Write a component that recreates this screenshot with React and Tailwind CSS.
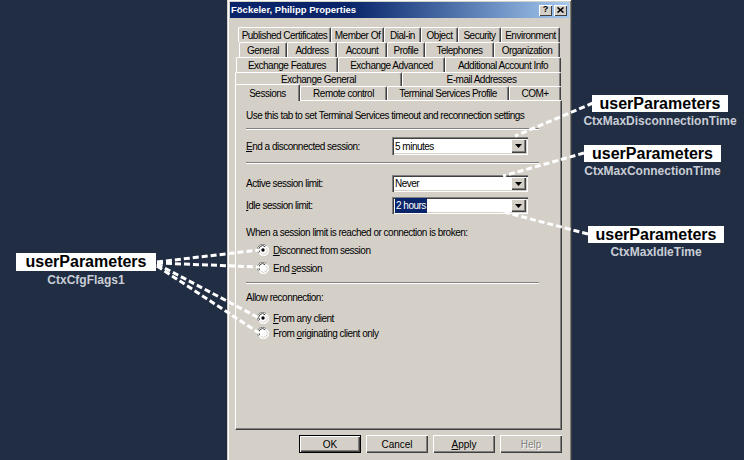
import React from "react";

const tabRows = [
  {
    row: "h-[15px] pl-[3px]",
    tabs: [
      ["Published Certificates", "w-[93px]"],
      ["Member Of", "w-[53px]"],
      ["Dial-in", "w-[37px]"],
      ["Object", "w-[37px]"],
      ["Security", "w-[43px]"],
      ["Environment", "w-[59px]"],
    ],
  },
  {
    row: "h-[15px] pl-[4px]",
    tabs: [
      ["General", "w-[48px]"],
      ["Address", "w-[50px]"],
      ["Account", "w-[50px]"],
      ["Profile", "w-[38px]"],
      ["Telephones", "w-[69px]"],
      ["Organization", "w-[66px]"],
    ],
  },
  {
    row: "h-[15px] pl-[1px]",
    tabs: [
      ["Exchange Features", "w-[102px]"],
      ["Exchange Advanced", "w-[107px]"],
      ["Additional Account Info", "w-[116px]"],
    ],
  },
  {
    row: "h-[14px]",
    tabs: [
      ["Exchange General", "w-[167px]"],
      ["E-mail Addresses", "w-[159px]"],
    ],
  },
];

const Tab = ({ label, w, active }) => (
  <div
    className={`${w} ${
      active ? "h-[17px] -mt-[2px] -mb-px relative z-10 bg-[#d4d0c8]" : "h-full"
    } flex items-center justify-center border-l border-t border-white border-r border-r-[#404040] rounded-t-[2px] shadow-[inset_-1px_0_0_#808080] whitespace-nowrap`}
  >
    {label}
  </div>
);

const Sep = () => (
  <div className="w-[293px] h-[2px] border-t border-[#808080] border-b border-b-white" />
);

const Arrow = () => (
  <svg width="7" height="4" viewBox="0 0 7 4">
    <path d="M0 0h7L3.5 4z" fill="#000" />
  </svg>
);

const Combo = ({ h, children }) => (
  <div className={`w-[136px] ${h} bg-white flex shadow-[inset_1px_1px_0_#808080,inset_2px_2px_0_#404040,inset_-1px_-1px_0_#fff,inset_-2px_-2px_0_#d4d0c8] p-[2px]`}>
    <div className="flex-1 flex items-center pl-px">{children}</div>
    <div className="w-[15px] h-full bg-[#d4d0c8] flex items-center justify-center shadow-[inset_1px_1px_0_#fff,inset_-1px_-1px_0_#404040,inset_-2px_-2px_0_#808080]">
      <Arrow />
    </div>
  </div>
);

const Radio = ({ checked }) => (
  <svg width="12" height="12" viewBox="0 0 12 12">
    <circle cx="6" cy="6" r="5.5" fill="#fff" />
    <path d="M1.8 9.2A5 5 0 0 1 9.2 1.8" stroke="#808080" fill="none" />
    <path d="M2.8 8.2A3.8 3.8 0 0 1 8.2 2.8" stroke="#404040" fill="none" />
    <path d="M10.2 2.8A5 5 0 0 1 2.8 10.2" stroke="#fff" fill="none" />
    <path d="M9.2 3.8A3.8 3.8 0 0 1 3.8 9.2" stroke="#d4d0c8" fill="none" />
    {checked && <circle cx="6" cy="6" r="1.7" fill="#000" />}
  </svg>
);

const RadioRow = ({ checked, className, children }) => (
  <div className={`flex items-center h-[12px] pl-[11px] gap-[4px] ${className}`}>
    <Radio checked={checked} />
    <span>{children}</span>
  </div>
);

const Btn = ({ children, def, disabled }) => (
  <div
    className={`w-[62px] h-[18px] flex items-center justify-center bg-[#d4d0c8] ${
      def
        ? "border border-black shadow-[inset_1px_1px_0_#fff,inset_-1px_-1px_0_#404040,inset_-2px_-2px_0_#808080]"
        : "shadow-[inset_1px_1px_0_#fff,inset_-1px_-1px_0_#404040,inset_-2px_-2px_0_#808080]"
    } ${disabled ? "text-[#808080] [text-shadow:1px_1px_0_#fff]" : ""}`}
  >
    {children}
  </div>
);

const Callout = ({ pos, box, caption }) => (
  <div className={`absolute ${pos} flex flex-col items-center`}>
    <div className={`${box} bg-white flex items-center justify-center text-black font-bold text-[16px] leading-none`}>
      userParameters
    </div>
    <div className="mt-[2px] text-[12px] leading-[14px] font-bold text-[#c9ced6] whitespace-nowrap">
      {caption}
    </div>
  </div>
);

export default function App() {
  return (
    <div className="relative w-[744px] h-[460px] overflow-hidden bg-[#212d43] font-['Liberation_Sans',Arial,sans-serif]">
      {/* dialog */}
      <div className="ml-[227px] -mt-px w-[345px] h-[480px] bg-[#d4d0c8] border border-[#d4d0c8] border-r-[#404040] border-b-[#404040] shadow-[inset_1px_1px_0_#fff,inset_-1px_-1px_0_#808080] p-[2px] text-[10px] tracking-[-0.5px] text-black">
        <div className="h-[16px] bg-linear-to-r from-[#0a246a] from-35% to-[#a6caf0] flex items-center justify-between pl-[1px] pr-[2px]">
          <span className="text-white font-bold text-[9.5px] tracking-normal">Föckeler, Philipp Properties</span>
          <div className="flex gap-[2px]">
            <div className="w-[13px] h-[11px] bg-[#d4d0c8] flex items-center justify-center font-bold text-[9px] tracking-normal shadow-[inset_1px_1px_0_#fff,inset_-1px_-1px_0_#404040]">
              ?
            </div>
            <div className="w-[13px] h-[11px] bg-[#d4d0c8] flex items-center justify-center shadow-[inset_1px_1px_0_#fff,inset_-1px_-1px_0_#404040]">
              <svg width="7" height="6" viewBox="0 0 7 6">
                <path d="M0.5 0.5L6.5 5.5M6.5 0.5L0.5 5.5" stroke="#000" strokeWidth="1.6" />
              </svg>
            </div>
          </div>
        </div>

        <div className="mt-[9px] ml-[5px] w-[327px]">
          {tabRows.map((r, i) => (
            <div key={i} className={`flex ${r.row}`}>
              {r.tabs.map(([label, w]) => (
                <Tab key={label} label={label} w={w} />
              ))}
            </div>
          ))}
          <div className="flex h-[14px] items-end">
            <Tab label="Sessions" w="w-[65px]" active />
            <Tab label="Remote control" w="w-[87px]" />
            <Tab label="Terminal Services Profile" w="w-[122px]" />
            <Tab label="COM+" w="w-[52px]" />
          </div>

          {/* panel */}
          <div className="h-[330px] border-l border-t border-white border-r border-r-[#404040] border-b border-b-[#404040] shadow-[inset_-1px_-1px_0_#808080] pl-[10px] pt-[9px] flex flex-col">
            <div className="h-[12px] leading-[12px]">
              Use this tab to set Terminal Services timeout and reconnection settings
            </div>
            <div className="mt-[6px]">
              <Sep />
            </div>
            <div className="mt-[7px] flex items-center">
              <span className="w-[146px]">
                <u>E</u>nd a disconnected session:
              </span>
              <Combo h="h-[18px]">5 minutes</Combo>
            </div>
            <div className="mt-[7px]">
              <Sep />
            </div>
            <div className="mt-[11px] flex items-center">
              <span className="w-[146px]">Active session limit:</span>
              <Combo h="h-[17px]">Never</Combo>
            </div>
            <div className="mt-[5px] flex items-center">
              <span className="w-[146px]">
                <u>I</u>dle session limit:
              </span>
              <Combo h="h-[17px]">
                <span className="bg-[#0a246a] text-white px-px">2 hours</span>
              </Combo>
            </div>
            <div className="mt-[13px] h-[12px] leading-[12px]">
              When a session limit is reached or connection is broken:
            </div>
            <RadioRow checked className="mt-[5px]">
              <u>D</u>isconnect from session
            </RadioRow>
            <RadioRow className="mt-[6px]">
              End <u>s</u>ession
            </RadioRow>
            <div className="mt-[8px]">
              <Sep />
            </div>
            <div className="mt-[8px] h-[12px] leading-[12px]">Allow reconnection:</div>
            <RadioRow checked className="mt-[8px]">
              <u>F</u>rom any client
            </RadioRow>
            <RadioRow className="mt-[3px]">
              From <u>o</u>riginating client only
            </RadioRow>
          </div>

          <div className="mt-[5px] flex justify-end gap-[5px] tracking-normal">
            <Btn def>OK</Btn>
            <Btn>Cancel</Btn>
            <Btn>
              <span>
                <u>A</u>pply
              </span>
            </Btn>
            <Btn disabled>Help</Btn>
          </div>
        </div>
      </div>

      {/* callout leader lines */}
      <svg className="absolute inset-0 pointer-events-none" width="744" height="460" viewBox="0 0 744 460">
        <g stroke="#fff" strokeWidth="3" strokeDasharray="6 3" fill="none">
          <path d="M593 103L515 136" />
          <path d="M584 153L503 176" />
          <path d="M588 234L500 211" />
          <path d="M157 262L259 250" />
          <path d="M157 263L259 267" />
          <path d="M157 264L259 318" />
          <path d="M157 266L259 333" />
        </g>
      </svg>

      <Callout pos="left-[584px] top-[95px] w-[152px]" box="w-[136px] h-[17px]" caption="CtxMaxDisconnectionTime" />
      <Callout pos="left-[584px] top-[145px] w-[137px]" box="w-[137px] h-[17px]" caption="CtxMaxConnectionTime" />
      <Callout pos="left-[588px] top-[226px] w-[136px]" box="w-[136px] h-[17px]" caption="CtxMaxIdleTime" />
      <Callout pos="left-[16px] top-[253px] w-[140px]" box="w-[140px] h-[18px]" caption="CtxCfgFlags1" />
    </div>
  );
}
